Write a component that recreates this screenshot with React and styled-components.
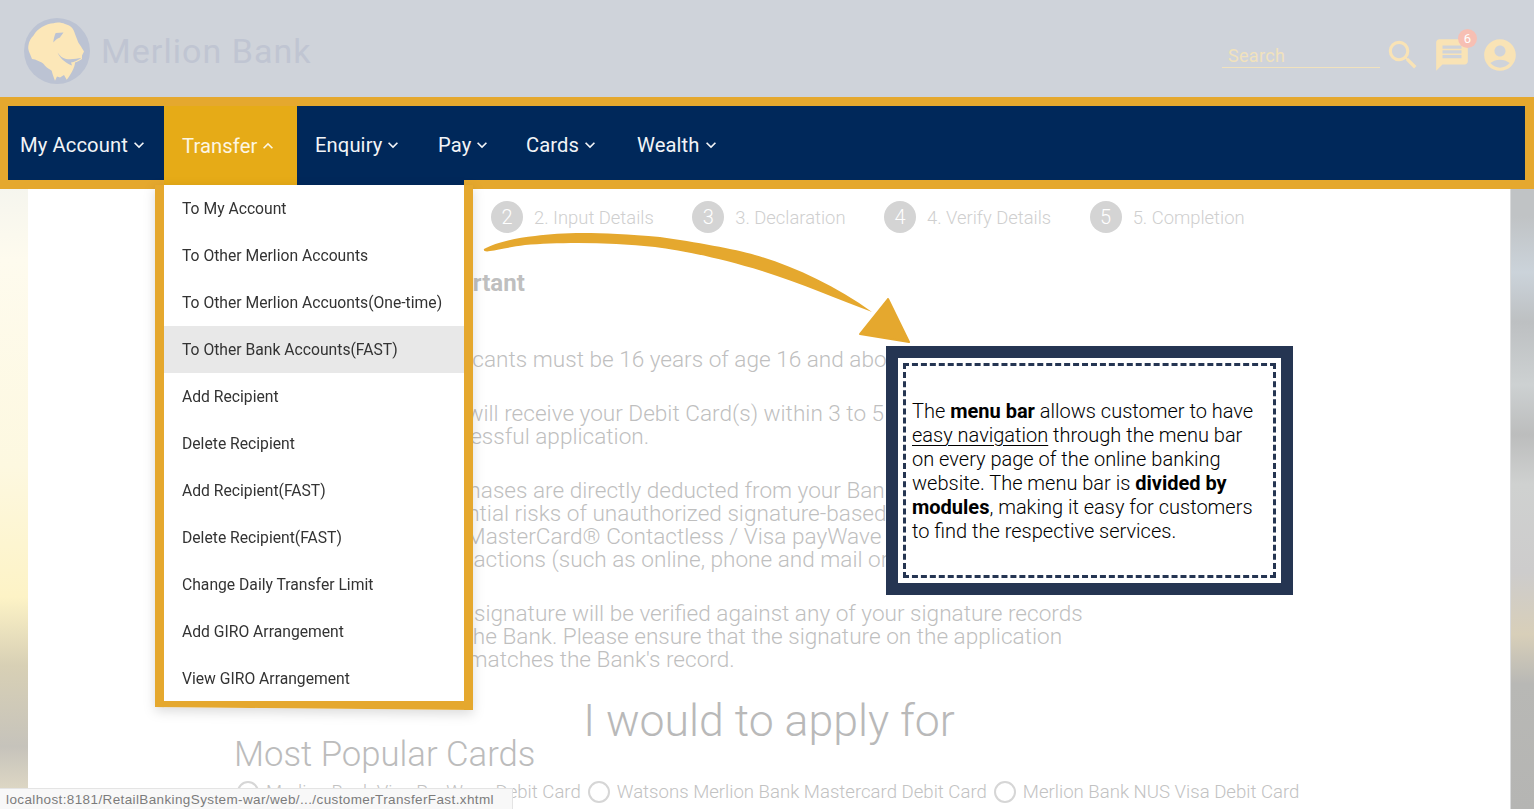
import React from 'react'
import styled, { createGlobalStyle } from 'styled-components'
import { MdSearch, MdMessage, MdAccountCircle, MdKeyboardArrowDown, MdKeyboardArrowUp } from 'react-icons/md'

const ORANGE = '#e5a82e'
const NAVY = '#00285a'

const GlobalStyle = createGlobalStyle`
  html, body {
    margin: 0;
    padding: 0;
    background: #fff;
    overflow: hidden;
  }
  body {
    font-family: Roboto, "Liberation Sans", sans-serif;
  }
  * {
    box-sizing: border-box;
  }
`

const Page = styled.div`
  position: relative;
  width: 1534px;
  height: 809px;
  overflow: hidden;
`

const Header = styled.header`
  height: 97px;
  background: #cfd3da;
  display: flex;
  align-items: center;
  justify-content: space-between;
  padding: 4px 15px 0 24px;
`

const Brand = styled.div`
  display: flex;
  align-items: center;
  gap: 11px;
`

const BrandName = styled.span`
  font-size: 34px;
  font-weight: 400;
  letter-spacing: 1.05px;
  color: #c0c5d2;
`

const Tools = styled.div`
  display: flex;
  align-items: center;
  margin-top: 9px;
`

const SearchField = styled.div`
  width: 158px;
  height: 25px;
  border-bottom: 1px solid #f1e2bd;
  padding: 3px 0 0 6px;
  margin-right: 4px;
  font-size: 18px;
  line-height: 20px;
  letter-spacing: 0.3px;
  color: #f1e2bd;
`

const ToolIcon = styled.span`
  position: relative;
  display: flex;
  color: #f9e3b5;
  margin-left: ${p => p.$gap}px;
`

const Badge = styled.span`
  position: absolute;
  top: -7px;
  right: -6px;
  width: 19px;
  height: 19px;
  border-radius: 50%;
  background: #f7bfb3;
  color: #fff;
  font-size: 13px;
  line-height: 19px;
  text-align: center;
`

const NavFrame = styled.nav`
  height: 88px;
  background: ${NAVY};
  border-top: 9px solid ${ORANGE};
  border-left: 8px solid ${ORANGE};
  border-right: 9px solid ${ORANGE};
  display: flex;
`

const NavItem = styled.div`
  width: ${p => p.$w}px;
  height: ${p => (p.$active ? 79 : 74)}px;
  background: ${p => (p.$active ? '#e6ab17' : 'transparent')};
  color: ${p => (p.$active ? '#fdf6e3' : '#f2f4f7')};
  padding: ${p => (p.$active ? '0 0 0' : '4px 0 0')} ${p => p.$pad}px;
  padding-right: 0;
  display: flex;
  align-items: center;
  font-size: 20.2px;
  letter-spacing: 0.1px;
  white-space: nowrap;

  svg {
    margin-left: 1px;
    flex: none;
  }
`

const FrameLip = styled.div`
  position: absolute;
  top: 180px;
  left: ${p => p.$left}px;
  width: ${p => p.$w}px;
  height: 9px;
  background: ${ORANGE};
`

const Main = styled.main`
  height: 624px;
  display: grid;
  grid-template-columns: 28px 1fr 24px;
`

const SideGlow = styled.div`
  background: linear-gradient(180deg, ${p => p.$stops});
  border-left: ${p => (p.$edge ? '1px solid #d9dadb' : '0')};
`

const Panel = styled.div`
  background: #fff;
  overflow: hidden;
`

const Steps = styled.div`
  display: flex;
  gap: 38.5px;
  padding: 16px 0 0 463px;
`

const Step = styled.div`
  display: flex;
  align-items: center;
  gap: 11px;
  font-size: 18.4px;
  font-weight: 300;
  color: #cfcfcf;
  white-space: nowrap;
`

const StepDot = styled.span`
  width: 32px;
  height: 32px;
  border-radius: 50%;
  background: #d4d4d4;
  color: #fff;
  font-size: 20px;
  line-height: 32px;
  text-align: center;
`

const Notes = styled.div`
  padding-left: 395px;
  margin-top: 39px;
  font-size: 22.6px;
  line-height: 23px;
  font-weight: 300;
  color: #bfbfbf;
  white-space: nowrap;
`

const NoteTitle = styled.div`
  font-weight: 700;
  font-size: 24px;
  margin: 0 0 53px -5px;
`

const Note = styled.p`
  margin: 0 0 31px;
`

const ApplyTitle = styled.h2`
  margin: -7px 0 0;
  font-size: 44.6px;
  line-height: 52px;
  font-weight: 300;
  text-align: center;
  color: #b9b9b9;
`

const CardsTitle = styled.h3`
  margin: -13px 0 0 206px;
  font-size: 34.7px;
  line-height: 40px;
  font-weight: 300;
  color: #bcbcbc;
`

const CardOptions = styled.div`
  display: flex;
  gap: 7px;
  margin: 6px 0 0 209px;
  font-size: 18.6px;
  line-height: 24px;
  font-weight: 300;
  color: #c2c2c2;
  white-space: nowrap;
`

const CardOption = styled.label`
  display: flex;
  align-items: center;
  gap: 7px;
`

const Radio = styled.span`
  width: 22px;
  height: 22px;
  border-radius: 50%;
  border: 2px solid #d6d6d6;
`

const DropdownShadow = styled.div`
  position: absolute;
  top: 185px;
  left: 155px;
  filter: drop-shadow(0 4px 6px rgba(0, 0, 0, 0.14));
`

const Dropdown = styled.div`
  width: 318px;
  height: 525px;
  background: #fff;
  border: 9px solid ${ORANGE};
  border-top: 0;
  clip-path: polygon(0 0, 100% 0, 100% 100%, 0 522px);
`

const DropdownItem = styled.div`
  height: 46.95px;
  padding: 1px 0 0 18px;
  display: flex;
  align-items: center;
  font-size: 15.7px;
  color: #333;
  white-space: nowrap;
  background: ${p => (p.$active ? '#e8e8e8' : 'transparent')};
`

const Arrow = styled.svg`
  position: absolute;
  top: 225px;
  left: 475px;
`

const Callout = styled.aside`
  position: absolute;
  top: 346px;
  left: 886px;
  width: 407px;
  height: 249px;
  background: #fff;
  border: 12px solid #253552;
  padding: 5px;
`

const CalloutInner = styled.div`
  height: 100%;
  border: 3px dashed #253552;
  padding: 0 6px;
  display: flex;
  align-items: center;
  font-family: Roboto, "Liberation Sans", Arial, sans-serif;
  font-weight: 300;
  font-size: 20px;
  line-height: 24px;
  color: #000;

  b {
    font-weight: 700;
  }

  u {
    text-underline-offset: 3px;
    text-decoration-thickness: 1px;
  }
`

const StatusBar = styled.div`
  position: absolute;
  left: 0;
  bottom: 0;
  width: 513px;
  height: 21px;
  background: #f8f8f8;
  border-top: 1px solid #e4e4e4;
  border-right: 1px solid #e4e4e4;
  padding-left: 6px;
  font-family: "Liberation Sans", Arial, sans-serif;
  font-size: 13.5px;
  line-height: 21px;
  letter-spacing: 0.38px;
  color: #7c7c7c;
  white-space: nowrap;
`

const navItems = [
  { label: 'My Account', w: 156, pad: 12 },
  { label: 'Transfer', w: 133, pad: 18, active: true },
  { label: 'Enquiry', w: 123, pad: 18 },
  { label: 'Pay', w: 88, pad: 18 },
  { label: 'Cards', w: 111, pad: 18 },
  { label: 'Wealth', w: 120, pad: 18 },
]

const menuItems = [
  'To My Account',
  'To Other Merlion Accounts',
  'To Other Merlion Accuonts(One-time)',
  'To Other Bank Accounts(FAST)',
  'Add Recipient',
  'Delete Recipient',
  'Add Recipient(FAST)',
  'Delete Recipient(FAST)',
  'Change Daily Transfer Limit',
  'Add GIRO Arrangement',
  'View GIRO Arrangement',
]

const steps = ['2. Input Details', '3. Declaration', '4. Verify Details', '5. Completion']

const cards = [
  'Merlion Bank Visa PayWave Debit Card',
  'Watsons Merlion Bank Mastercard Debit Card',
  'Merlion Bank NUS Visa Debit Card',
]

const leftGlow = '#f5f5ee 0, #fefbee 12%, #fdf8e0 45%, #fdf3c6 66%, #d8d0b5 77%, #c6c3bb 90%, #e8e0c8 100%'
const rightGlow = '#c0c3c5 5%, #cbd3da 14%, #bdc0c2 22%, #cdd1d2 32%, #bcbdbd 40%, #cfd1d0 48%, #cdcccc 62%, #d8cfb9 72%, #b8b8b5 80%, #b5b5b3 100%'

const LionLogo = () => (
  <svg width="66" height="66" viewBox="0 0 66 66">
    <circle cx="33" cy="33" r="33" fill="#bcc3d3" />
    <path
      fill="#fce7b8"
      d="M4.3 28 C5 23 7 20 9.5 17.5 C12 13 15 11 18 9 C22 6.5 26 5.5 29.5 5.2 C33 4 38 4.5 41 6 C44 7 46.5 8 47.7 9.5 C49.5 11.5 50.5 14 51 16 L54.3 24.5 L57 28.5 L60 33.5 L58 37.5 L58 41 C55 43 53 44 51 44.5 C51 47 50 49 49.3 51 C47.5 55 45 59 42.7 61.7 L40 57 L36 59.5 L33 58.5 L31 62.7 C29.5 59 28.5 56 27.7 52.7 C25.5 51 23 50 21 47.7 C20 46 18 44 15.5 43.5 L11 41.5 L8 41 L6 36 C4.5 33 4 30.5 4.3 28 Z"
    />
    <path fill="#bcc3d3" d="M29.3 24.5 C29.5 21 30.5 17.5 31.7 15 L39.5 14.5 C38 16.5 37 18 36 19.5 C33.5 20 31.5 22 29.3 24.5 Z" />
    <path fill="#bcc3d3" d="M33.5 34.5 C36 38 38 40 42 41 C47 41.5 53 41 57.8 39.8 C54 42.5 50 44 47 44.5 L48 47.5 C43 45.5 37 42 33.5 34.5 Z" />
  </svg>
)

const App = () => (
  <Page>
    <GlobalStyle />
    <Header>
      <Brand>
        <LionLogo />
        <BrandName>Merlion Bank</BrandName>
      </Brand>
      <Tools>
        <SearchField>Search</SearchField>
        <ToolIcon $gap={0}><MdSearch size={38} /></ToolIcon>
        <ToolIcon $gap={11}>
          <MdMessage size={38} />
          <Badge>6</Badge>
        </ToolIcon>
        <ToolIcon $gap={10}><MdAccountCircle size={38} /></ToolIcon>
      </Tools>
    </Header>

    <NavFrame>
      {navItems.map(item => (
        <NavItem key={item.label} $w={item.w} $pad={item.pad} $active={item.active}>
          {item.label}
          {item.active ? <MdKeyboardArrowUp size={20} /> : <MdKeyboardArrowDown size={20} />}
        </NavItem>
      ))}
    </NavFrame>
    <FrameLip $left={0} $w={164} />
    <FrameLip $left={464} $w={1070} />

    <Main>
      <SideGlow $stops={leftGlow} />
      <Panel>
        <Steps>
          {steps.map(step => (
            <Step key={step}>
              <StepDot>{step[0]}</StepDot>
              {step}
            </Step>
          ))}
        </Steps>
        <Notes>
          <NoteTitle>Important</NoteTitle>
          <Note>Applicants must be 16 years of age 16 and above.</Note>
          <Note>
            You will receive your Debit Card(s) within 3 to 5 days<br />
            successful application.
          </Note>
          <Note>
            Purchases are directly deducted from your Bank<br />
            potential risks of unauthorized signature-based<br />
            The MasterCard® Contactless / Visa payWave<br />
            transactions (such as online, phone and mail order)
          </Note>
          <Note>
            Your signature will be verified against any of your signature records<br />
            and the Bank. Please ensure that the signature on the application<br />
            that matches the Bank's record.
          </Note>
        </Notes>
        <ApplyTitle>I would to apply for</ApplyTitle>
        <CardsTitle>Most Popular Cards</CardsTitle>
        <CardOptions>
          {cards.map(card => (
            <CardOption key={card}>
              <Radio />
              {card}
            </CardOption>
          ))}
        </CardOptions>
      </Panel>
      <SideGlow $stops={rightGlow} $edge />
    </Main>

    <DropdownShadow>
      <Dropdown>
        {menuItems.map((item, i) => (
          <DropdownItem key={item} $active={i === 3}>{item}</DropdownItem>
        ))}
      </Dropdown>
    </DropdownShadow>

    <Arrow width="440" height="125" viewBox="475 225 440 125">
      <path
        fill={ORANGE}
        d="M484 249 C495 243 515 238 535 236 C565 232 600 232 660 237 C695 242 735 249 755 255 C790 265 835 285 872 312 C840 300 800 283 762 271 C720 258 680 250 655 247 C610 242 560 242 525 245 C510 247 498 250 490 251 C486 252 483 251 484 249 Z"
      />
      <path
        fill={ORANGE}
        stroke={ORANGE}
        strokeWidth="2"
        strokeLinejoin="round"
        d="M888 299 L860 334 L909 342 Z"
      />
    </Arrow>

    <Callout>
      <CalloutInner>
        <div>
          The <b>menu bar</b> allows customer to have <u>easy navigation</u> through the menu bar on every
          page of the online banking website. The menu bar is <b>divided by modules</b>, making it easy for
          customers to find the respective services.
        </div>
      </CalloutInner>
    </Callout>

    <StatusBar>localhost:8181/RetailBankingSystem-war/web/.../customerTransferFast.xhtml</StatusBar>
  </Page>
)

export default App
